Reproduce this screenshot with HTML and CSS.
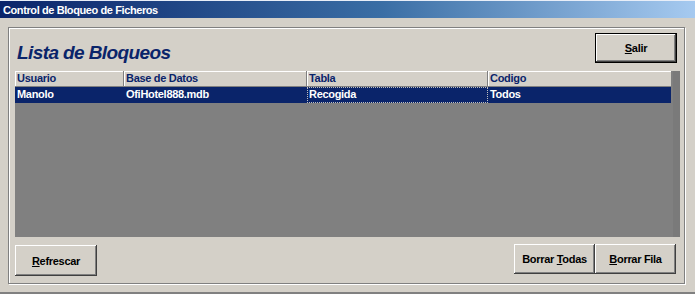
FILE: index.html
```html
<!DOCTYPE html>
<html>
<head>
<meta charset="utf-8">
<link rel="stylesheet" href="styles.css">
</head>
<body>
<div class="window">
  <div class="titlebar">Control de Bloqueo de Ficheros</div>
  <div class="frame">
    <div class="top">
      <div class="heading">Lista de Bloqueos</div>
      <div class="btn default salir"><span><span class="u">S</span>alir</span></div>
    </div>
    <div class="grid">
      <div class="table">
        <div class="row head">
          <div class="cell c1">Usuario</div>
          <div class="cell c2">Base de Datos</div>
          <div class="cell c3">Tabla</div>
          <div class="cell c4">Codigo</div>
        </div>
        <div class="row sel">
          <div class="cell c1">Manolo</div>
          <div class="cell c2">OfiHotel888.mdb</div>
          <div class="cell c3 focus">Recogida</div>
          <div class="cell c4">Todos</div>
        </div>
      </div>
    </div>
    <div class="bottom">
      <div class="btn refrescar"><span><span class="u">R</span>efrescar</span></div>
      <div class="right">
        <div class="btn borrar"><span>Borrar <span class="u">T</span>odas</span></div>
        <div class="btn borrar"><span><span class="u">B</span>orrar Fila</span></div>
      </div>
    </div>
  </div>
</div>
</body>
</html>
```
FILE: styles.css
```css
* { box-sizing: border-box; }
html, body { margin: 0; padding: 0; }
body {
  width: 695px;
  height: 294px;
  background: #d4d0c8;
  font-family: "Liberation Sans", Arial, sans-serif;
  font-size: 11px;
  font-weight: bold;
  overflow: hidden;
}
.window {
  width: 695px;
  height: 294px;
  display: flex;
  flex-direction: column;
  border-bottom: 2px solid #808080;
}
.titlebar {
  height: 18px;
  background: linear-gradient(to right, #0a246a 0%, #3a6ea5 55%, #a6caf0 100%);
  color: #fff;
  padding: 3px 0 0 3px;
  font-size: 11px;
  line-height: 13px;
  letter-spacing: -0.4px;
  border-top: 1px solid #e8eef8;
}
.frame {
  margin: 9px 10px 0 8px;
  height: 257px;
  border: 1px solid #808080;
  box-shadow: inset 1px 1px 0 #fff, 1px 1px 0 #fff;
  padding: 5px 4px 0 6px;
  display: flex;
  flex-direction: column;
}
.top {
  display: flex;
  justify-content: space-between;
  align-items: flex-start;
  height: 31px;
}
.heading {
  font-family: "Liberation Sans", Arial, sans-serif;
  font-style: italic;
  font-weight: bold;
  font-size: 19px;
  letter-spacing: -0.6px;
  color: #0a246a;
  margin: 9px 0 0 2px;
}
.btn {
  display: flex;
  align-items: center;
  justify-content: center;
  background: #d4d0c8;
  color: #000;
  font-size: 11px;
  letter-spacing: -0.3px;
  box-shadow: inset -1px -1px 0 #404040, inset 1px 1px 0 #fff, inset -2px -2px 0 #808080, inset 2px 2px 0 #d4d0c8;
}
.btn.default {
  border: 1px solid #000;
}
.salir {
  width: 82px;
  height: 30px;
  margin-top: 0;
  margin-right: 3px;
}
.u { text-decoration: underline; }
.grid {
  margin-top: 7px;
  height: 166px;
  background: #808080;
  box-shadow: inset -7px 0 0 #7a7a7a;
}
.table { width: 656px; }
.row {
  display: flex;
  height: 16px;
}
.cell {
  padding: 1px 0 0 2px;
  line-height: 13px;
  letter-spacing: -0.3px;
  white-space: nowrap;
  overflow: hidden;
}
.c1 { width: 109px; }
.c2 { width: 183px; }
.c3 { width: 181px; }
.c4 { width: 183px; }
.head .cell {
  background: #d4d0c8;
  color: #0a246a;
  border-right: 1px solid #808080;
  box-shadow: inset 1px 1px 0 #fff;
  border-bottom: 1px solid #808080;
}
.head .c4 { border-right: none; }
.sel { background: #0a246a; }
.sel .cell { color: #fff; }
.sel .focus {
  outline: 1px dotted #c0c0c0;
  outline-offset: -1px;
}
.bottom {
  display: flex;
  justify-content: space-between;
  align-items: flex-start;
  margin-top: 7px;
}
.refrescar {
  width: 82px;
  height: 31px;
  margin-top: 1px;
}
.right {
  display: flex;
  margin-right: 4px;
}
.borrar {
  width: 81px;
  height: 30px;
}
```
